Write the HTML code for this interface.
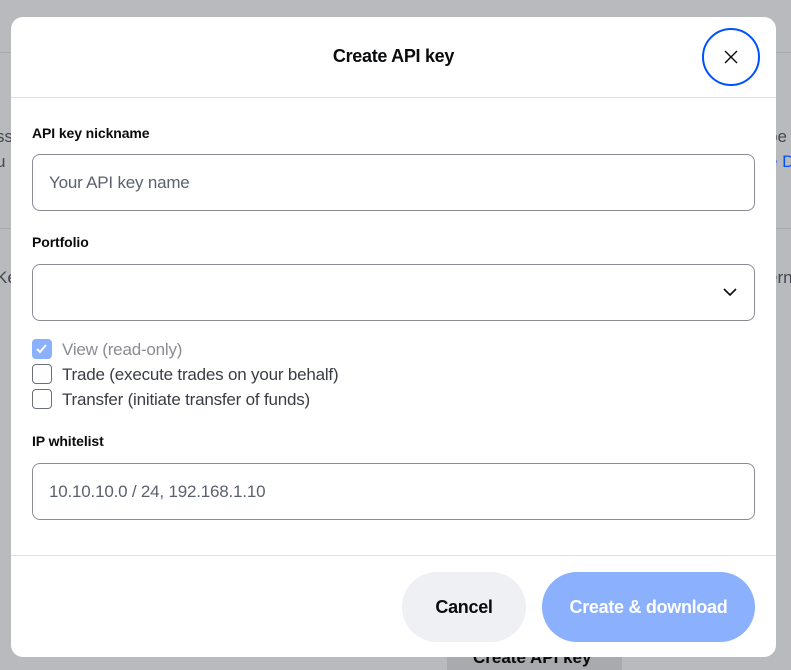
<!DOCTYPE html>
<html><head><style>
*{box-sizing:border-box;margin:0;padding:0}
body{width:791px;height:665px;background:#b9babe;font-family:"Liberation Sans",sans-serif;position:relative;overflow:hidden;color:#0a0b0d}
.bgline{position:absolute;left:0;right:0;height:1px;background:#a9aaae}
.bgt{position:absolute;font-size:17px;color:#44474d;white-space:nowrap}
.modal{position:absolute;left:11px;top:17px;width:765px;height:640px;background:#fff;border-radius:12px;overflow:hidden}
.title{position:absolute;top:29px;left:0;width:765px;text-align:center;font-weight:bold;font-size:18px;letter-spacing:-0.3px}
.close{position:absolute;left:691px;top:11px;width:58px;height:58px;border:2px solid #0052ff;border-radius:50%}
.hr{position:absolute;left:0;width:765px;height:1px;background:#dedfe2}
.lbl{position:absolute;left:21px;font-weight:bold;font-size:14px;letter-spacing:-0.1px}
.inp{position:absolute;left:21px;width:723px;height:57px;border:1px solid #8a8d94;border-radius:8px;font-size:17px;color:#5b616e;padding:18px 0 0 16px;letter-spacing:-0.2px}
.cb{position:absolute;left:21px;width:20px;height:20px;border:1.5px solid #6b6f78;border-radius:4px}
.cbt{position:absolute;left:51px;font-size:17px;color:#3a3d44;letter-spacing:-0.2px}
.btn{position:absolute;top:555px;height:70px;border-radius:35px;font-weight:bold;font-size:18px;text-align:center;line-height:70px;letter-spacing:-0.3px}
</style></head><body>
<div class="bgline" style="top:52px"></div>
<div class="bgline" style="top:228px"></div>
<div class="bgt" style="left:-4px;top:127px">ss</div>
<div class="bgt" style="left:-4px;top:152px">u</div>
<div class="bgt" style="left:-4px;top:268px">Ke</div>
<div class="bgt" style="left:768px;top:127px">pe</div>
<div class="bgt" style="left:768px;top:152px;color:#0052ff">e D</div>
<div class="bgt" style="left:768px;top:268px">ern</div>
<div style="position:absolute;left:447px;top:640px;width:175px;height:30px;background:#a9aaae"></div>
<div style="position:absolute;left:473px;top:648px;font-weight:bold;font-size:17px">Create API key</div>
<div class="modal">
<div class="title">Create API key</div>
<div class="close"><svg width="54" height="54" viewBox="0 0 54 54"><path d="M21 21L33 33M33 21L21 33" stroke="#0a0b0d" stroke-width="1.4" fill="none"/></svg></div>
<div class="hr" style="top:80px"></div>
<div class="lbl" style="top:108px">API key nickname</div>
<div class="inp" style="top:137px">Your API key name</div>
<div class="lbl" style="top:217px">Portfolio</div>
<div class="inp" style="top:247px"><svg style="position:absolute;right:16px;top:21px" width="16" height="12" viewBox="0 0 16 12"><path d="M2 3L8 9L14 3" stroke="#0a0b0d" stroke-width="1.6" fill="none"/></svg></div>
<div class="cb" style="top:322px;background:#8ab0fe;border-color:#8ab0fe"><svg width="17" height="17" viewBox="0 0 17 17" style="position:absolute;left:0;top:0"><path d="M4 9L7 12L13 5" stroke="#fff" stroke-width="2" fill="none"/></svg></div>
<div class="cbt" style="top:323px;color:#898c93">View (read-only)</div>
<div class="cb" style="top:347px"></div>
<div class="cbt" style="top:348px">Trade (execute trades on your behalf)</div>
<div class="cb" style="top:372px"></div>
<div class="cbt" style="top:373px">Transfer (initiate transfer of funds)</div>
<div class="lbl" style="top:416px">IP whitelist</div>
<div class="inp" style="top:446px">10.10.10.0 / 24, 192.168.1.10</div>
<div class="hr" style="top:538px"></div>
<div class="btn" style="left:391px;width:124px;background:#eef0f3">Cancel</div>
<div class="btn" style="left:531px;width:213px;background:#8ab0fe;color:#fff">Create &amp; download</div>
</div>
</body></html>
